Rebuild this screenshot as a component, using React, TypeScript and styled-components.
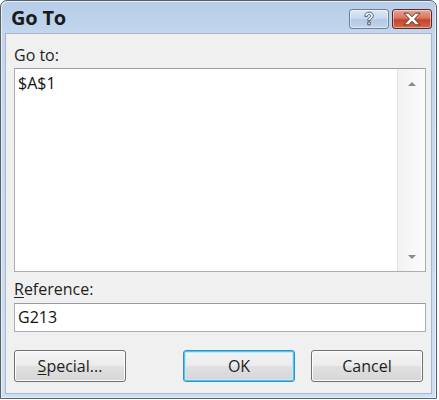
import React from "react";
import styled, { createGlobalStyle } from "styled-components";

const Global = createGlobalStyle`
  html, body { margin: 0; padding: 0; background: #ffffff; }
  body { font-family: "Open Sans", "Noto Sans", sans-serif; }
`;

const Window = styled.div`
  box-sizing: border-box;
  width: 437px;
  height: 399px;
  border: 1px solid #5a5f66;
  border-radius: 7px 7px 0 0;
  background: linear-gradient(to bottom, #b5cde8 0px, #c2d7ee 32px, #cde0f3 100%);
  display: flex;
  flex-direction: column;
  padding: 0 4px 4px 4px;
  box-shadow: inset 1px 1px 0 #e6effa, inset -1px -1px 0 #e6effa;
`;

const TitleBar = styled.div`
  height: 32px;
  display: flex;
  align-items: center;
  justify-content: space-between;
  padding-left: 6px;
`;

const Title = styled.div`
  font-family: "Open Sans", "Noto Sans", sans-serif;
  font-weight: 700;
  font-size: 20px;
  color: #1b1b1b;
  letter-spacing: -0.2px;
  margin-top: 1px;
`;

const Caption = styled.div`
  display: flex;
  gap: 3px;
  align-items: center;
  margin-top: 3px;
`;

const CapBtn = styled.div<{ $close?: boolean }>`
  box-sizing: border-box;
  width: 40px;
  height: 20px;
  border-radius: 3px;
  border: 1px solid ${(p) => (p.$close ? "#5d2a26" : "#6f7f96")};
  background: ${(p) =>
    p.$close
      ? "linear-gradient(to bottom, #e9a694 0%, #d9745f 45%, #c3432b 55%, #d6694a 100%)"
      : "linear-gradient(to bottom, #dde8f5 0%, #c9d9ed 45%, #b3c8e3 55%, #c3d5ec 100%)"};
  box-shadow: inset 0 0 0 1px rgba(255, 255, 255, 0.45);
  display: flex;
  align-items: center;
  justify-content: center;
`;

const Client = styled.div`
  flex: 1;
  background: #f0f0f0;
  border: 1px solid #a7b8cc;
  padding: 11px 7px 0 8px;
  display: flex;
  flex-direction: column;
`;

const Label = styled.div<{ $gap?: number }>`
  font-size: 16px;
  line-height: 20px;
  color: #1e1e1e;
  margin-top: ${(p) => p.$gap ?? 0}px;
`;

const Acc = styled.span`
  text-decoration: underline;
  text-underline-offset: 2px;
  text-decoration-thickness: 1px;
`;

const ListBox = styled.div`
  box-sizing: border-box;
  margin-top: 3px;
  height: 204px;
  width: 412px;
  border: 1px solid #abadb3;
  border-top-color: #9a9ca2;
  background: #ffffff;
  display: flex;
`;

const ListText = styled.div`
  flex: 1;
  padding: 4px 3px;
  font-size: 16px;
  line-height: 20px;
  color: #111;
`;

const ScrollBar = styled.div`
  width: 27px;
  background: linear-gradient(to right, #f2f2f2, #fbfbfb);
  border-left: 1px solid #e4e4e4;
  display: flex;
  flex-direction: column;
  justify-content: space-between;
  align-items: center;
  padding: 13px 0 12px;
`;

const Arrow = styled.div<{ $down?: boolean }>`
  width: 0;
  height: 0;
  border-left: 4px solid transparent;
  border-right: 4px solid transparent;
  ${(p) =>
    p.$down
      ? "border-top: 4px solid #8a8a8a;"
      : "border-bottom: 4px solid #8a8a8a;"}
`;

const Input = styled.div`
  box-sizing: border-box;
  margin-top: 4px;
  height: 29px;
  width: 412px;
  border: 1px solid #abadb3;
  border-top-color: #9a9ca2;
  background: #ffffff;
  padding: 3px 3px;
  font-size: 16px;
  line-height: 20px;
  color: #111;
`;

const ButtonRow = styled.div`
  margin-top: 18px;
  display: flex;
  width: 410px;
`;

const Button = styled.div<{ $default?: boolean; $push?: number }>`
  box-sizing: border-box;
  width: 112px;
  height: 32px;
  margin-left: ${(p) => p.$push ?? 0}px;
  border: 1px solid ${(p) => (p.$default ? "#3c8cc4" : "#707070")};
  border-radius: 3px;
  background: linear-gradient(to bottom, #f4f4f4 0%, #ececec 48%, #e0e0e0 52%, #d6d6d6 100%);
  box-shadow: ${(p) =>
    p.$default
      ? "inset 0 0 0 1px #48c8f3, inset 0 0 0 2px #bdeafb"
      : "inset 0 0 0 1px #fcfcfc"};
  display: flex;
  align-items: center;
  justify-content: center;
  font-size: 16px;
  color: #1e1e1e;
`;

function HelpIcon() {
  return (
    <svg width="16" height="16" viewBox="0 0 16 16">
      <path
        d="M3.8 5.4 C3.8 2.6 5.8 1.2 8.1 1.2 C10.6 1.2 12.3 2.6 12.3 4.7 C12.3 6.5 11 7.3 10 7.9 C9.3 8.3 9.2 8.7 9.2 9.8 L6.8 9.8 C6.8 8.2 7.2 7.3 8.4 6.6 C9.4 6 9.8 5.6 9.8 4.9 C9.8 4 9.1 3.5 8.1 3.5 C7 3.5 6.3 4.2 6.3 5.4 Z M6.8 11 L9.2 11 L9.2 13.8 L6.8 13.8 Z"
        fill="#ffffff"
        stroke="#3e4c60"
        strokeWidth="0.9"
        strokeLinejoin="round"
      />
    </svg>
  );
}

function CloseIcon() {
  return (
    <svg width="20" height="14" viewBox="0 0 20 14">
      <path
        d="M2 1.2 L6.6 1.2 L10 4.8 L13.4 1.2 L18 1.2 L12.6 7 L18 12.8 L13.4 12.8 L10 9.2 L6.6 12.8 L2 12.8 L7.4 7 Z"
        fill="#ffffff"
        stroke="#5e241d"
        strokeWidth="0.9"
        strokeLinejoin="round"
      />
    </svg>
  );
}

export default function App() {
  return (
    <>
      <Global />
      <Window>
        <TitleBar>
          <Title>Go To</Title>
          <Caption>
            <CapBtn>
              <HelpIcon />
            </CapBtn>
            <CapBtn $close>
              <CloseIcon />
            </CapBtn>
          </Caption>
        </TitleBar>
        <Client>
          <Label>Go to:</Label>
          <ListBox>
            <ListText>$A$1</ListText>
            <ScrollBar>
              <Arrow />
              <Arrow $down />
            </ScrollBar>
          </ListBox>
          <Label $gap={7}>
            <Acc>R</Acc>eference:
          </Label>
          <Input>G213</Input>
          <ButtonRow>
            <Button>
              <Acc>S</Acc>pecial...
            </Button>
            <Button $default $push={57}>
              OK
            </Button>
            <Button $push={16}>Cancel</Button>
          </ButtonRow>
        </Client>
      </Window>
    </>
  );
}
